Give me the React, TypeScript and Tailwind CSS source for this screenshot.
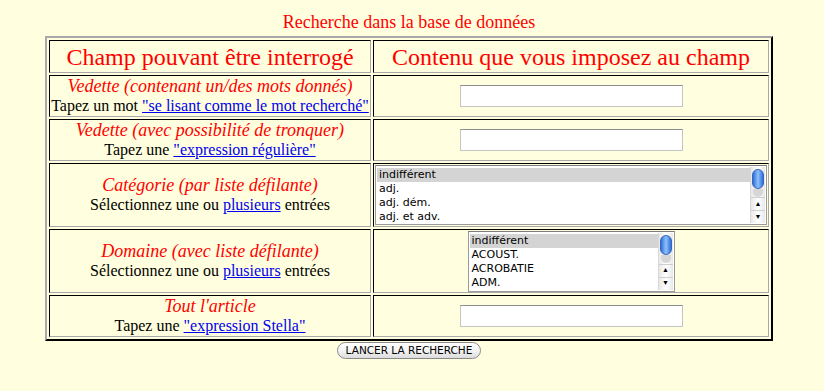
const cell =
  'border border-t-black border-l-black border-r-[#a9a9a9] border-b-[#a9a9a9] flex flex-col items-center justify-center text-center';

function Label({ title, children }: { title: string; children: React.ReactNode }) {
  return (
    <>
      <div className="italic text-[#ff0000] text-[18px] leading-[19px]">{title}</div>
      <div className="text-black text-[16px] leading-[19px]">{children}</div>
    </>
  );
}

function Link({ children }: { children: React.ReactNode }) {
  return <a href="#" className="text-[#0000ee] underline">{children}</a>;
}

function TextBox() {
  return (
    <div className="w-[223px] h-[22px] bg-white border border-[#c4c4c4] border-t-[#8e8e8e]" />
  );
}

function Scrollbar() {
  return (
    <div className="w-[15px] flex flex-col bg-gradient-to-r from-[#e8e8e8] via-white to-[#e8e8e8] border-l border-[#d8d8d8]">
      <div className="flex-1 pt-[2px] px-[1px]">
        <div className="h-[20px] rounded-full bg-gradient-to-r from-[#2e6fd8] via-[#8fc1fb] to-[#2e6fd8] border border-[#3865b8]" />
        <div className="h-[8px] mx-[1px] rounded-b-full bg-[#d6d6d6]" />
      </div>
      <div className="h-[13px] border-t border-[#cfcfcf] flex items-center justify-center text-[7px] leading-none text-black">▲</div>
      <div className="h-[13px] border-t border-[#cfcfcf] flex items-center justify-center text-[7px] leading-none text-black">▼</div>
    </div>
  );
}

function ListBox({ items, className }: { items: string[]; className: string }) {
  return (
    <div className={`flex bg-white border border-[#9a9a9a] border-t-[#7d7d7d] p-[1px] ${className}`}>
      <div className="flex-1 pt-[1px] font-['DejaVu_Sans',sans-serif] text-[11px] leading-[14px] text-black text-left">
        {items.map((item, i) => (
          <div key={item} className={`pl-[2px] h-[14px] ${i === 0 ? 'bg-[#d4d4d4]' : ''}`}>
            {item}
          </div>
        ))}
      </div>
      <Scrollbar />
    </div>
  );
}

export default function App() {
  return (
    <div className="min-h-[391px] bg-[#ffffdf] font-['Liberation_Serif',serif] flex flex-col items-center pt-[12px] pr-[6px]">
      <div className="text-[#ff0000] text-[18px] leading-[21px]">Recherche dans la base de données</div>

      <div className="mt-[3px] border-2 border-t-[#a9a9a9] border-l-[#a9a9a9] border-r-black border-b-black p-[2px] grid grid-cols-[322px_396px] auto-rows-auto gap-[2px]">
        <div className={`${cell} h-[33px] text-[#ff0000] text-[24px]`}>Champ pouvant être interrogé</div>
        <div className={`${cell} h-[33px] text-[#ff0000] text-[24px]`}>Contenu que vous imposez au champ</div>

        <div className={`${cell} h-[42px]`}>
          <Label title="Vedette (contenant un/des mots donnés)">
            Tapez un mot <Link>"se lisant comme le mot recherché"</Link>
          </Label>
        </div>
        <div className={`${cell} h-[42px]`}>
          <TextBox />
        </div>

        <div className={`${cell} h-[42px]`}>
          <Label title="Vedette (avec possibilité de tronquer)">
            Tapez une <Link>"expression régulière"</Link>
          </Label>
        </div>
        <div className={`${cell} h-[42px]`}>
          <TextBox />
        </div>

        <div className={`${cell} h-[64px]`}>
          <Label title="Catégorie (par liste défilante)">
            Sélectionnez une ou <Link>plusieurs</Link> entrées
          </Label>
        </div>
        <div className={`${cell} h-[64px] px-[1px]`}>
          <ListBox className="w-full h-[60px]" items={['indifférent', 'adj.', 'adj. dém.', 'adj. et adv.']} />
        </div>

        <div className={`${cell} h-[64px]`}>
          <Label title="Domaine (avec liste défilante)">
            Sélectionnez une ou <Link>plusieurs</Link> entrées
          </Label>
        </div>
        <div className={`${cell} h-[64px]`}>
          <ListBox className="w-[207px] h-[61px]" items={['indifférent', 'ACOUST.', 'ACROBATIE', 'ADM.']} />
        </div>

        <div className={`${cell} h-[42px]`}>
          <Label title="Tout l'article">
            Tapez une <Link>"expression Stella"</Link>
          </Label>
        </div>
        <div className={`${cell} h-[42px]`}>
          <TextBox />
        </div>
      </div>

      <button className="mt-[1px] h-[17px] px-[8px] rounded-full border border-[#8a8a8a] bg-gradient-to-b from-white via-[#f4f4f4] to-[#dcdcdc] font-['DejaVu_Sans',sans-serif] text-[10.5px] leading-none text-black">
        LANCER LA RECHERCHE
      </button>
    </div>
  );
}
